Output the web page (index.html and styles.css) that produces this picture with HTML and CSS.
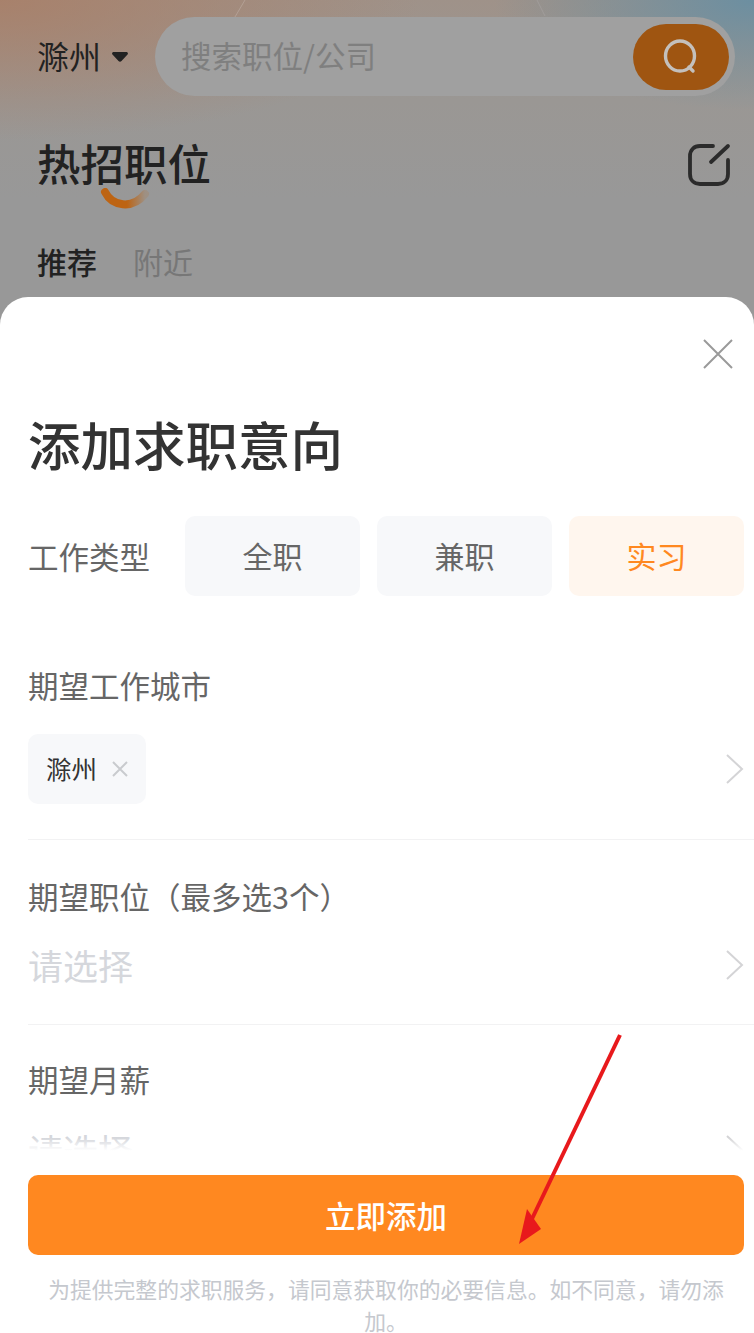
FILE: index.html
```html
<!DOCTYPE html>
<html lang="zh">
<head>
  <meta charset="UTF-8">
  <meta name="viewport" content="width=device-width, initial-scale=1.0">
  <title>添加求职意向</title>
  <link rel="stylesheet" href="styles.css">
</head>
<body>
  <div class="screen">
    <div class="home">
      <svg class="home-lines" width="754" height="60" viewBox="0 0 754 60" fill="none" stroke-width="1">
        <path d="M245 0l-13 22" stroke="#b3a095"/>
        <path d="M537 0l8 16" stroke="#a09c9a"/>
      </svg>
      <div class="search-row">
        <div class="city">滁州
          <svg class="city-caret" width="16" height="10" viewBox="0 0 16 10" fill="#222">
            <path d="M2 0h12c2 0 2.500 1.500 1.300 2.800L9.500 9c-.8.900-2.200.900-3 0L.7 2.800C-.5 1.500 0 0 2 0z"/>
          </svg>
        </div>
        <div class="search-box">
          <span class="search-text">搜索职位/公司</span>
          <div class="search-btn">
            <svg width="38" height="38" viewBox="0 0 38 38" fill="none" stroke="#c4c0bc" stroke-width="3.4" stroke-linecap="round">
              <ellipse cx="18" cy="18" rx="14.500" ry="15"/>
              <path d="M27 29l4 4"/>
            </svg>
          </div>
        </div>
      </div>
      <div class="title-row">
        <div class="title-wrap">
          <h2 class="home-title">热招职位</h2>
          <svg class="title-smile" width="52" height="24" viewBox="0 0 52 24" fill="none">
            <defs>
              <linearGradient id="smile-fade" x1="0" y1="0" x2="1" y2="0">
                <stop offset="0.55" stop-color="#bd6413"/>
                <stop offset="1" stop-color="#bd6413" stop-opacity="0.15"/>
              </linearGradient>
            </defs>
            <path d="M5 4c7 14 27 18 40 2" stroke="url(#smile-fade)" stroke-width="8" stroke-linecap="round"/>
          </svg>
        </div>
        <svg class="edit-icon" width="44" height="44" viewBox="0 0 44 44" fill="none" stroke="#2b2b2b" stroke-width="3.800" stroke-linecap="round">
          <path d="M26 3H13C7 3 3 7 3 13v18c0 6 4 10 10 10h18c6 0 10-4 10-10V17"/>
          <path d="M24 19L41 3"/>
        </svg>
      </div>
      <div class="tabs">
        <span class="tab tab-active">推荐</span>
        <span class="tab">附近</span>
      </div>
    </div>

    <div class="sheet">
      <div class="sheet-body">
        <div class="close-row">
          <svg width="32" height="32" viewBox="0 0 32 32" stroke="#9a9a9a" stroke-width="2">
            <path d="M2 2l28 28M30 2L2 30"/>
          </svg>
        </div>
        <h1 class="sheet-title">添加求职意向</h1>
        <div class="type-row">
          <span class="type-label">工作类型</span>
          <div class="type-opts">
            <div class="type-opt">全职</div>
            <div class="type-opt">兼职</div>
            <div class="type-opt type-opt-on">实习</div>
          </div>
        </div>

        <div class="field field-city">
          <div class="field-label">期望工作城市</div>
          <div class="field-value">
            <div class="tag"><span class="tag-text">滁州</span>
              <svg width="18" height="18" viewBox="0 0 18 18" stroke="#c9cbce" stroke-width="2">
                <path d="M2 2l14 14M16 2L2 16"/>
              </svg>
            </div>
            <svg class="chevron" width="20" height="32" viewBox="0 0 20 32" fill="none" stroke="#d4d4d6" stroke-width="2">
              <path d="M2 2l15 14L2 30"/>
            </svg>
          </div>
        </div>

        <div class="field field-job">
          <div class="field-label">期望职位（最多选3个）</div>
          <div class="field-value">
            <span class="placeholder">请选择</span>
            <svg class="chevron" width="20" height="32" viewBox="0 0 20 32" fill="none" stroke="#d4d4d6" stroke-width="2">
              <path d="M2 2l15 14L2 30"/>
            </svg>
          </div>
        </div>

        <div class="field field-pay">
          <div class="field-label">期望月薪</div>
          <div class="field-value">
            <span class="placeholder">请选择</span>
            <svg class="chevron" width="20" height="32" viewBox="0 0 20 32" fill="none" stroke="#d4d4d6" stroke-width="2">
              <path d="M2 2l15 14L2 30"/>
            </svg>
          </div>
        </div>
      </div>

      <div class="sheet-foot">
        <button class="submit" type="button">立即添加</button>
        <p class="notice">为提供完整的求职服务，请同意获取你的必要信息。如不同意，请勿添加。</p>
      </div>
    </div>

    <svg class="arrow" width="754" height="1333" viewBox="0 0 754 1333">
      <path d="M620 1035L530 1223" stroke="#e8191c" stroke-width="4" fill="none"/>
      <path d="M519 1244L527 1209 541 1229z" fill="#e8191c"/>
    </svg>
  </div>
</body>
</html>
```

FILE: styles.css
```css
* {
  box-sizing: border-box;
}
body {
  margin: 0;
  padding: 0;
  background-color: #fff;
  font-family: "Noto Sans CJK SC", "Noto Sans", sans-serif;
}
.screen {
  position: relative;
  width: 754px;
  height: 1333px;
  overflow: hidden;
  background-color: #989898;
}
.home {
  position: relative;
  height: 340px;
  padding: 17px 19px 0 37px;
  background:
    radial-gradient(ellipse 260px 110px at 754px 0, #6c8fa1 0%, rgba(108, 143, 161, 0) 100%),
    radial-gradient(ellipse 420px 140px at 0 0, rgba(170, 125, 100, 0.8) 0%, rgba(170, 125, 100, 0) 100%),
    linear-gradient(180deg, #9f9289 0, #9a9794 100px, #989898 200px);
}
.home-lines {
  position: absolute;
  left: 0;
  top: 0;
}
.search-row {
  position: relative;
  display: flex;
  align-items: center;
  height: 79px;
}
.city {
  display: flex;
  align-items: center;
  width: 118px;
  flex-shrink: 0;
  font-size: 32px;
  line-height: 44px;
  margin-top: -3px;
  color: #222;
}
.city-caret {
  margin: 3px 0 0 11px;
}
.search-box {
  flex: 1;
  display: flex;
  align-items: center;
  justify-content: space-between;
  height: 79px;
  padding: 0 6px 0 26px;
  border-radius: 40px;
  background-color: #a0a0a0;
}
.search-text {
  font-size: 30.5px;
  line-height: 44px;
  margin-top: -4px;
  color: #7f7f7f;
}
.search-btn {
  display: flex;
  align-items: center;
  justify-content: center;
  width: 96px;
  height: 66px;
  border-radius: 33px;
  background-color: #9f5511;
}
.title-row {
  display: flex;
  align-items: flex-start;
  justify-content: space-between;
  margin-top: 37px;
  padding-right: 4px;
}
.title-wrap {
  position: relative;
}
.home-title {
  margin: 0;
  font-size: 43.5px;
  line-height: 60px;
  font-weight: 500;
  color: #222;
}
.title-smile {
  position: absolute;
  left: 63px;
  top: 55px;
}
.edit-icon {
  margin-top: 10px;
}
.tabs {
  display: flex;
  gap: 36px;
  margin-top: 46px;
}
.tab {
  font-size: 30px;
  line-height: 44px;
  color: #777;
}
.tab-active {
  font-weight: 500;
  color: #222;
}
.sheet {
  position: absolute;
  left: 0;
  top: 297px;
  width: 754px;
  height: 1036px;
  display: flex;
  flex-direction: column;
  border-radius: 28px 28px 0 0;
  background-color: #fff;
}
.sheet-body {
  position: relative;
  flex-shrink: 0;
  height: 855px;
  padding: 0 0 0 28px;
  overflow: hidden;
}
.sheet-body::after {
  content: "";
  position: absolute;
  left: 0;
  right: 0;
  bottom: 0;
  height: 14px;
  background: linear-gradient(rgba(255, 255, 255, 0), #fff 90%);
}
.close-row {
  display: flex;
  justify-content: flex-end;
  padding: 41px 20px 0 0;
}
.sheet-title {
  margin: 35px 0 0;
  font-size: 52.5px;
  line-height: 76px;
  font-weight: 500;
  color: #333;
}
.type-row {
  display: flex;
  align-items: center;
  margin-top: 35px;
}
.type-label {
  width: 157px;
  font-size: 30.5px;
  color: #666;
}
.type-opts {
  display: flex;
  gap: 17px;
}
.type-opt {
  width: 175px;
  height: 80px;
  border-radius: 10px;
  background-color: #f7f8fa;
  font-size: 30px;
  line-height: 78px;
  text-align: center;
  color: #666;
}
.type-opt-on {
  background-color: #fff6ee;
  color: #ff8820;
}
.field {
  padding-right: 9px;
}
.field-label {
  font-size: 30.5px;
  line-height: 44px;
  color: #666;
}
.field-value {
  display: flex;
  align-items: center;
  justify-content: space-between;
}
.field-city {
  margin-top: 67px;
  height: 177px;
  border-bottom: 1px solid #f2f2f3;
}
.field-city .field-value {
  margin-top: 27px;
}
.field-job {
  margin-top: 34px;
  height: 151px;
  border-bottom: 1px solid #f2f2f3;
}
.field-job .field-value {
  margin-top: 22px;
}
.field-pay {
  margin-top: 32px;
}
.field-pay .field-value {
  margin-top: 24px;
}
.tag {
  display: flex;
  align-items: center;
  gap: 14px;
  width: 118px;
  height: 70px;
  padding-left: 18px;
  border-radius: 10px;
  background-color: #f7f8fa;
  font-size: 25.5px;
  color: #333;
}
.tag-text {
  margin-top: -3px;
}
.placeholder {
  font-size: 35px;
  line-height: 50px;
  color: #d5d7dc;
}
.sheet-foot {
  padding: 23px 10px 0 28px;
}
.submit {
  display: block;
  width: 716px;
  height: 80px;
  border: 0;
  border-radius: 10px;
  background-color: #ff8820;
  font-family: inherit;
  font-size: 30.5px;
  font-weight: 500;
  color: #fff;
}
.notice {
  margin: 18px 0 0;
  padding: 0 14px;
  font-size: 21.8px;
  line-height: 32px;
  text-align: center;
  color: #c5c8ce;
}
.arrow {
  position: absolute;
  left: 0;
  top: 0;
  pointer-events: none;
}
```
